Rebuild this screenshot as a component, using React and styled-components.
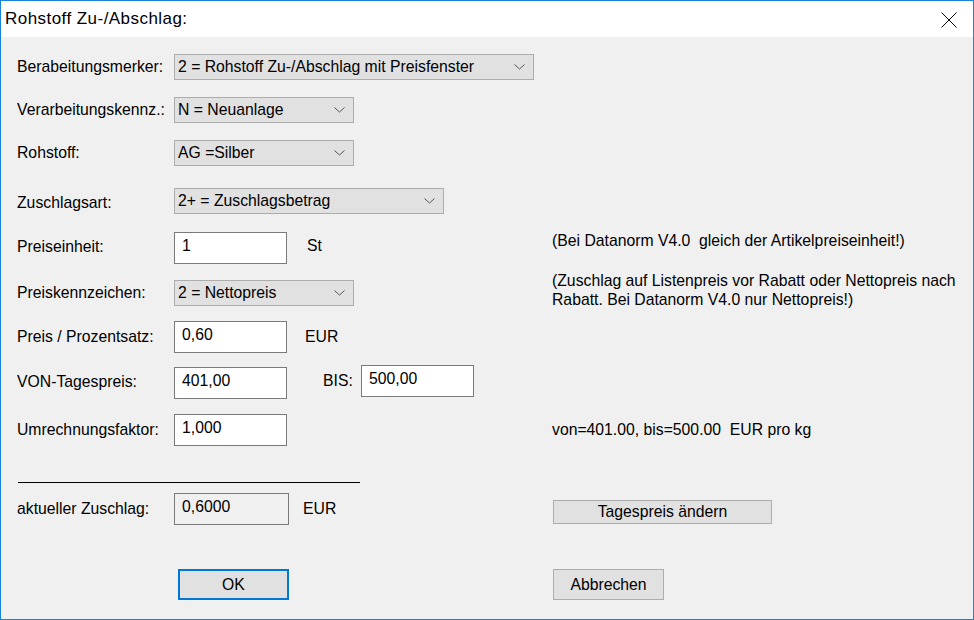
import React from "react";
import styled, { createGlobalStyle } from "styled-components";

const Global = createGlobalStyle`
  html, body { margin: 0; padding: 0; background: #f0f0f0; }
  * { box-sizing: border-box; }
`;

const FONT = `"Liberation Sans", Arial, sans-serif`;

const Window = styled.div`
  width: 974px;
  height: 620px;
  border: 1px solid #1883d7;
  background: #f0f0f0;
  display: flex;
  flex-direction: column;
  font-family: ${FONT};
  font-size: 15.75px;
  color: #000;
`;

const TitleBar = styled.div`
  height: 36px;
  background: #fff;
  display: flex;
  align-items: center;
  justify-content: space-between;
  padding: 0 16px 0 4px;
  flex-shrink: 0;
`;

const Title = styled.div`
  font-size: 17px;
  letter-spacing: 0.45px;
`;

const CloseIcon = styled.svg`
  width: 16px;
  height: 16px;
  display: block;
  margin-top: 1px;
`;

const Body = styled.div`
  flex: 1;
  padding: 17px 0 0 16px;
  display: flex;
  flex-direction: column;
`;

const Row = styled.div`
  display: grid;
  grid-template-columns: 157px 378px 1fr;
  align-items: center;
  height: ${(p) => p.$h}px;
  margin-top: ${(p) => p.$gap || 0}px;
`;

const Label = styled.div`
  white-space: nowrap;
  align-self: center;
  margin-top: ${(p) => p.$dy || 0}px;
`;

const Cell = styled.div`
  display: flex;
  align-items: ${(p) => p.$align || "center"};
  height: 100%;
`;

const Select = styled.div`
  width: ${(p) => p.$w}px;
  height: 26px;
  background: #e1e1e1;
  border: 1px solid #adadad;
  display: flex;
  align-items: center;
  justify-content: space-between;
  padding: 0 8px 0 3px;
  white-space: nowrap;
`;

const Chevron = () => (
  <svg width="11" height="6" viewBox="0 0 11 6">
    <polyline points="0.5,0.5 5.5,5 10.5,0.5" fill="none" stroke="#555" strokeWidth="1" />
  </svg>
);

const Input = styled.div`
  width: ${(p) => p.$w || 113}px;
  height: 32px;
  background: ${(p) => (p.$disabled ? "#f0f0f0" : "#fff")};
  border: 1px solid #7a7a7a;
  padding: 4px 0 0 7px;
  margin-top: ${(p) => p.$dy || 0}px;
  white-space: nowrap;
`;

const Unit = styled.div`
  margin-left: ${(p) => p.$ml}px;
  margin-top: ${(p) => p.$dy || 0}px;
  width: ${(p) => (p.$w ? `${p.$w}px` : "auto")};
  white-space: nowrap;
`;

const Note = styled.div`
  align-self: start;
  line-height: 19px;
  margin-top: ${(p) => p.$dy || 0}px;
`;

const Separator = styled.div`
  width: 342px;
  height: 1px;
  background: #000;
  margin-top: ${(p) => p.$gap}px;
  margin-left: 1px;
`;

const Button = styled.div`
  width: ${(p) => p.$w}px;
  height: ${(p) => p.$h}px;
  background: #e1e1e1;
  border: ${(p) => (p.$default ? "2px solid #0078d7" : "1px solid #adadad")};
  display: flex;
  align-items: center;
  justify-content: center;
  margin-left: ${(p) => p.$ml || 0}px;
  margin-top: ${(p) => p.$dy || 0}px;
  white-space: nowrap;
`;

export default function App() {
  return (
    <>
      <Global />
      <Window>
        <TitleBar>
          <Title>Rohstoff Zu-/Abschlag:</Title>
          <CloseIcon viewBox="0 0 16 16">
            <path d="M0.5 0.5 L15.5 15.5 M15.5 0.5 L0.5 15.5" stroke="#000" strokeWidth="1" fill="none" />
          </CloseIcon>
        </TitleBar>
        <Body>
          <Row $h={26}>
            <Label>Berabeitungsmerker:</Label>
            <Cell>
              <Select $w={360}>
                2 = Rohstoff Zu-/Abschlag mit Preisfenster
                <Chevron />
              </Select>
            </Cell>
          </Row>
          <Row $h={26} $gap={17}>
            <Label>Verarbeitungskennz.:</Label>
            <Cell>
              <Select $w={180}>
                N = Neuanlage
                <Chevron />
              </Select>
            </Cell>
          </Row>
          <Row $h={26} $gap={17}>
            <Label>Rohstoff:</Label>
            <Cell>
              <Select $w={180}>
                AG =Silber
                <Chevron />
              </Select>
            </Cell>
          </Row>
          <Row $h={26} $gap={22}>
            <Label $dy={3}>Zuschlagsart:</Label>
            <Cell>
              <Select $w={270}>
                2+ = Zuschlagsbetrag
                <Chevron />
              </Select>
            </Cell>
          </Row>
          <Row $h={32} $gap={18}>
            <Label $dy={-3}>Preiseinheit:</Label>
            <Cell>
              <Input>1</Input>
              <Unit $ml={20} $dy={-4}>St</Unit>
            </Cell>
            <Note $dy={-1}>(Bei Datanorm V4.0&nbsp; gleich der Artikelpreiseinheit!)</Note>
          </Row>
          <Row $h={26} $gap={13}>
            <Label>Preiskennzeichen:</Label>
            <Cell>
              <Select $w={180}>
                2 = Nettopreis
                <Chevron />
              </Select>
            </Cell>
            <Note $dy={-6}>
              (Zuschlag auf Listenpreis vor Rabatt oder Nettopreis nach
              <br />
              Rabatt. Bei Datanorm V4.0 nur Nettopreis!)
            </Note>
          </Row>
          <Row $h={32} $gap={18}>
            <Label>Preis / Prozentsatz:</Label>
            <Cell>
              <Input>0,60</Input>
              <Unit $ml={18}>EUR</Unit>
            </Cell>
          </Row>
          <Row $h={34} $gap={12}>
            <Label>VON-Tagespreis:</Label>
            <Cell $align="flex-start">
              <Input $dy={2}>401,00</Input>
              <Unit $ml={36} $w={38} $dy={7}>BIS:</Unit>
              <Input>500,00</Input>
            </Cell>
          </Row>
          <Row $h={32} $gap={15}>
            <Label>Umrechnungsfaktor:</Label>
            <Cell>
              <Input>1,000</Input>
            </Cell>
            <Note $dy={6}>von=401.00, bis=500.00&nbsp; EUR pro kg</Note>
          </Row>
          <Separator $gap={36} />
          <Row $h={32} $gap={10}>
            <Label>aktueller Zuschlag:</Label>
            <Cell>
              <Input $disabled $w={115}>0,6000</Input>
              <Unit $ml={14}>EUR</Unit>
            </Cell>
            <Cell>
              <Button $w={219} $h={24} $ml={1} $dy={6}>Tagespreis ändern</Button>
            </Cell>
          </Row>
          <Row $h={31} $gap={44}>
            <div />
            <Cell>
              <Button $default $w={111} $h={31} $ml={4}>OK</Button>
            </Cell>
            <Cell>
              <Button $w={111} $h={31} $ml={1}>Abbrechen</Button>
            </Cell>
          </Row>
        </Body>
      </Window>
    </>
  );
}
